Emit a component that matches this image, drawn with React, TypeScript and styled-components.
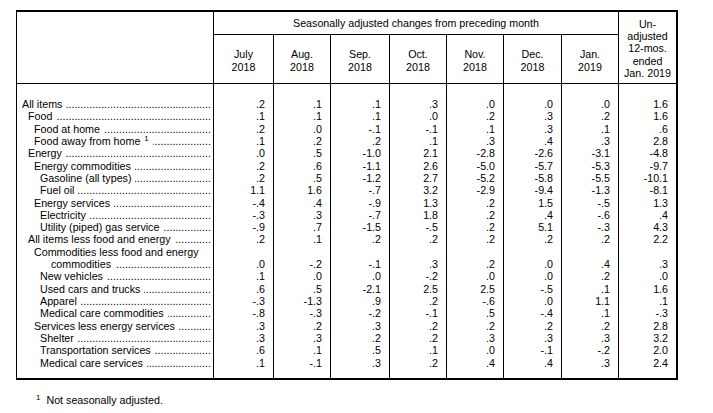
import React from "react";
import styled, { createGlobalStyle } from "styled-components";

const Global = createGlobalStyle`
  html, body { margin: 0; padding: 0; background: #fff; }
  body { font-family: "Liberation Sans", Arial, Helvetica, sans-serif; color: #000; }
`;

const Page = styled.div`
  padding: 10px 0 0 16px;
`;

const Table = styled.div`
  display: grid;
  grid-template-columns: 196px 60px 57px 59px 57px 57px 58px 57px 58px;
  grid-template-rows: 23px 49px;
  width: max-content;
  border-top: 2px solid #000;
  border-bottom: 2px solid #000;
  border-left: 1px solid #000;
  border-right: 2px solid #000;
  font-size: 10.7px;
  line-height: 12.32px;
`;

const StubHead = styled.div`
  grid-column: 1;
  grid-row: 1 / span 2;
  border-bottom: 1px solid #000;
`;

const GroupHead = styled.div`
  grid-column: 2 / span 7;
  grid-row: 1;
  border-left: 1px solid #000;
  border-bottom: 1px solid #000;
  display: flex;
  align-items: center;
  justify-content: center;
  padding-top: 1px;
`;

const MonthHead = styled.div`
  grid-row: 2;
  border-left: 1px solid #000;
  border-bottom: 1px solid #000;
  display: flex;
  flex-direction: column;
  align-items: center;
  justify-content: center;
  padding-top: 3px;
  text-align: center;
`;

const UnadjHead = styled.div`
  grid-column: 9;
  grid-row: 1 / span 2;
  border-left: 1px solid #000;
  border-bottom: 1px solid #000;
  display: flex;
  flex-direction: column;
  align-items: center;
  justify-content: center;
  padding-top: 2px;
  text-align: center;
`;

const Row = styled.div`
  display: contents;
`;

const LabelCell = styled.div<{ $first?: boolean; $last?: boolean }>`
  grid-column: 1;
  padding: ${(p) => (p.$first ? 14 : 0)}px 2px ${(p) => (p.$last ? 9 : 0)}px 0;
  display: flex;
  flex-direction: column;
  justify-content: flex-end;
`;

const Line = styled.div<{ $indent: number }>`
  display: flex;
  padding-left: ${(p) => p.$indent}px;
  white-space: nowrap;
`;

const Leader = styled.span`
  flex: 1;
  min-width: 0;
  overflow: hidden;
  white-space: nowrap;
  direction: rtl;
  margin-left: 4px;
  &::before {
    content: "................................................................................................";
  }
`;

const NumCell = styled.div<{ $first?: boolean; $last?: boolean }>`
  border-left: 1px solid #000;
  padding: ${(p) => (p.$first ? 14 : 0)}px 8px ${(p) => (p.$last ? 9 : 0)}px 0;
  display: flex;
  align-items: flex-end;
  justify-content: flex-end;
  white-space: nowrap;
`;

const Sup = styled.sup`
  font-size: 8px;
  line-height: 0;
  vertical-align: 4px;
  margin-left: 4px;
`;

const Footnote = styled.p`
  margin: 14px 0 0 20px;
  font-size: 10.7px;
  line-height: 12.32px;
`;

const NoteMark = styled.sup`
  font-size: 8px;
  line-height: 0;
  vertical-align: 4px;
  margin-right: 6px;
`;

type Item = {
  label: string;
  level: number;
  values: string[];
  note?: boolean;
  cont?: string;
};

const items: Item[] = [
  { label: "All items", level: 0, values: [".2", ".1", ".1", ".3", ".0", ".0", ".0", "1.6"] },
  { label: "Food", level: 1, values: [".1", ".1", ".1", ".0", ".2", ".3", ".2", "1.6"] },
  { label: "Food at home", level: 2, values: [".2", ".0", "-.1", "-.1", ".1", ".3", ".1", ".6"] },
  { label: "Food away from home", level: 2, note: true, values: [".1", ".2", ".2", ".1", ".3", ".4", ".3", "2.8"] },
  { label: "Energy", level: 1, values: [".0", ".5", "-1.0", "2.1", "-2.8", "-2.6", "-3.1", "-4.8"] },
  { label: "Energy commodities", level: 2, values: [".2", ".6", "-1.1", "2.6", "-5.0", "-5.7", "-5.3", "-9.7"] },
  { label: "Gasoline (all types)", level: 3, values: [".2", ".5", "-1.2", "2.7", "-5.2", "-5.8", "-5.5", "-10.1"] },
  { label: "Fuel oil", level: 3, values: ["1.1", "1.6", "-.7", "3.2", "-2.9", "-9.4", "-1.3", "-8.1"] },
  { label: "Energy services", level: 2, values: ["-.4", ".4", "-.9", "1.3", ".2", "1.5", "-.5", "1.3"] },
  { label: "Electricity", level: 3, values: ["-.3", ".3", "-.7", "1.8", ".2", ".4", "-.6", ".4"] },
  { label: "Utility (piped) gas service", level: 3, values: ["-.9", ".7", "-1.5", "-.5", ".2", "5.1", "-.3", "4.3"] },
  { label: "All items less food and energy", level: 1, values: [".2", ".1", ".2", ".2", ".2", ".2", ".2", "2.2"] },
  { label: "Commodities less food and energy", cont: "commodities", level: 2, values: [".0", "-.2", "-.1", ".3", ".2", ".0", ".4", ".3"] },
  { label: "New vehicles", level: 3, values: [".1", ".0", ".0", "-.2", ".0", ".0", ".2", ".0"] },
  { label: "Used cars and trucks", level: 3, values: [".6", ".5", "-2.1", "2.5", "2.5", "-.5", ".1", "1.6"] },
  { label: "Apparel", level: 3, values: ["-.3", "-1.3", ".9", ".2", "-.6", ".0", "1.1", ".1"] },
  { label: "Medical care commodities", level: 3, values: ["-.8", "-.3", "-.2", "-.1", ".5", "-.4", ".1", "-.3"] },
  { label: "Services less energy services", level: 2, values: [".3", ".2", ".3", ".2", ".2", ".2", ".2", "2.8"] },
  { label: "Shelter", level: 3, values: [".3", ".3", ".2", ".2", ".3", ".3", ".3", "3.2"] },
  { label: "Transportation services", level: 3, values: [".6", ".1", ".5", ".1", ".0", "-.1", "-.2", "2.0"] },
  { label: "Medical care services", level: 3, values: [".1", "-.1", ".3", ".2", ".4", ".4", ".3", "2.4"] },
];

const months = [
  ["July", "2018"],
  ["Aug.", "2018"],
  ["Sep.", "2018"],
  ["Oct.", "2018"],
  ["Nov.", "2018"],
  ["Dec.", "2018"],
  ["Jan.", "2019"],
];

const indent = (level: number) => 5 + level * 6;

export default function App() {
  return (
    <>
      <Global />
      <Page>
        <Table>
          <StubHead />
          <GroupHead>Seasonally adjusted changes from preceding month</GroupHead>
          {months.map(([m, y]) => (
            <MonthHead key={m}>
              <span>{m}</span>
              <span>{y}</span>
            </MonthHead>
          ))}
          <UnadjHead>
            <span>Un-</span>
            <span>adjusted</span>
            <span>12-mos.</span>
            <span>ended</span>
            <span>Jan. 2019</span>
          </UnadjHead>
          {items.map((it, i) => {
            const first = i === 0;
            const last = i === items.length - 1;
            return (
              <Row key={it.label}>
                <LabelCell $first={first} $last={last}>
                  {it.cont ? (
                    <>
                      <Line $indent={indent(it.level)}>{it.label}</Line>
                      <Line $indent={34}>
                        <span>{it.cont}</span>
                        <Leader />
                      </Line>
                    </>
                  ) : (
                    <Line $indent={indent(it.level)}>
                      <span>
                        {it.label}
                        {it.note && <Sup>1</Sup>}
                      </span>
                      <Leader />
                    </Line>
                  )}
                </LabelCell>
                {it.values.map((v, j) => (
                  <NumCell key={j} $first={first} $last={last}>
                    {v}
                  </NumCell>
                ))}
              </Row>
            );
          })}
        </Table>
        <Footnote>
          <NoteMark>1</NoteMark>Not seasonally adjusted.
        </Footnote>
      </Page>
    </>
  );
}
